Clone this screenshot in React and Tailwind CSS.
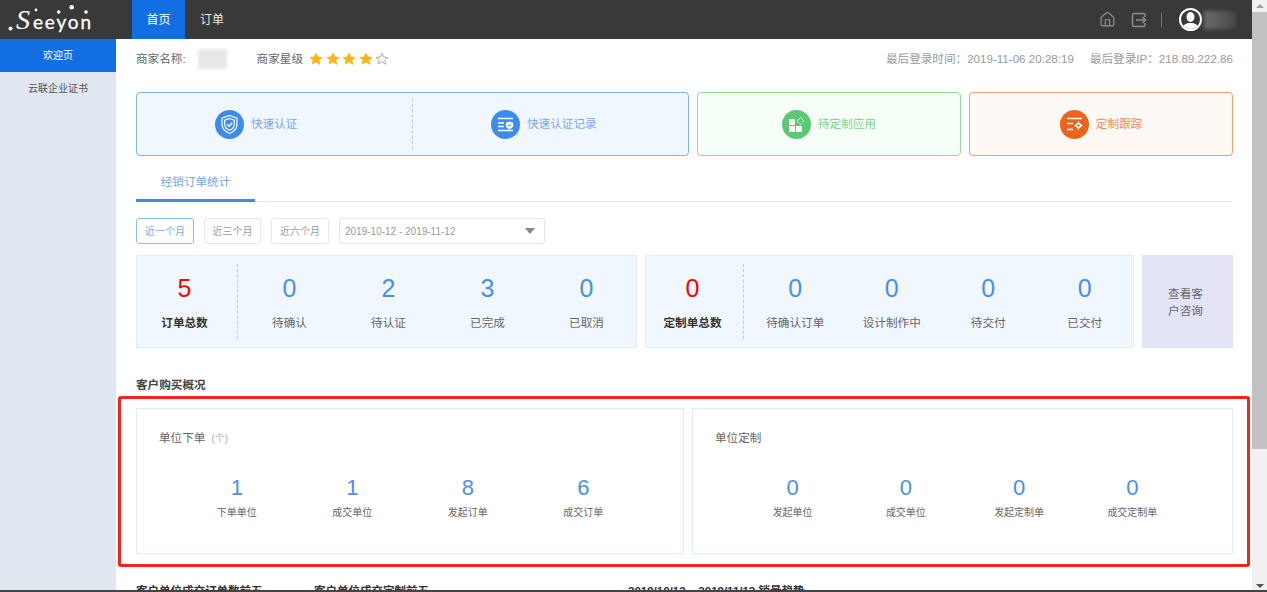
// Merchant console welcome page: top bar, side menu, order stats and customer overview.
import { Home } from 'lucide-react';

const orderStats = [['0', '待确认'], ['2', '待认证'], ['3', '已完成'], ['0', '已取消']];
const customStats = [['0', '待确认订单'], ['0', '设计制作中'], ['0', '待交付'], ['0', '已交付']];
const unitOrders = [['1', '下单单位'], ['1', '成交单位'], ['8', '发起订单'], ['6', '成交订单']];
const unitCustom = [['0', '发起单位'], ['0', '成交单位'], ['0', '发起定制单'], ['0', '成交定制单']];

function Logo() {
  return (
    <svg width="132" height="39" viewBox="0 0 132 39" fill="#fff">
      <circle cx="10.5" cy="28.5" r="2" />
      <circle cx="36" cy="10" r="1.4" />
      <circle cx="58.7" cy="12" r="1.8" />
      <circle cx="71.7" cy="7.3" r="2.3" />
      <circle cx="86" cy="12" r="1.8" />
      <text x="16" y="29" fontSize="28" fontStyle="italic" className="font-['Liberation_Serif',serif]">S</text>
      <text x="33" y="29" fontSize="19" stroke="#fff" strokeWidth="0.3" textLength="58" lengthAdjust="spacing" className="font-['Lato',sans-serif]">eeyon</text>
    </svg>
  );
}

function Star({ filled }) {
  return (
    <svg width="14" height="14" viewBox="0 0 24 24" fill={filled ? '#fdb414' : 'none'} stroke={filled ? '#fdb414' : '#a8a8a8'} strokeWidth="1.6" strokeLinejoin="round">
      <path d="M12 2l3 6.6 7.2.8-5.4 4.8 1.5 7.1L12 16.7l-6.3 3.6 1.5-7.1L1.8 9.4 9 8.6z" />
    </svg>
  );
}

function Circle({ color, children }) {
  return (
    <div className={`flex h-[29px] w-[29px] shrink-0 items-center justify-center rounded-full ${color}`}>
      <svg width="21" height="21" viewBox="0 0 21 21" fill="none" stroke="#fff" strokeWidth="1.2">{children}</svg>
    </div>
  );
}

function ShieldIcon() {
  return (
    <Circle color="bg-[#3b8cec]">
      <path d="M10.5 1.5l7.5 2.6v6c0 4.6-3.2 7.8-7.5 9.4C6.2 17.9 3 14.7 3 10.100v-6z" />
      <path d="M10.500 4.500l4.800 1.700v4c0 2.900-2 5-4.800 6.100-2.800-1.100-4.800-3.200-4.800-6.100v-4z" />
      <path d="M8 10.200l2 2 3.200-3.400" strokeWidth="1.400" />
    </Circle>
  );
}

function RecordIcon() {
  return (
    <Circle color="bg-[#3b8cec]">
      <path d="M3 4.500h15M3 9h6M3 12.500h6M3 16.500h15" strokeWidth="1.500" />
      <path d="M14.500 7.500l3.700 1.200v2.600c0 1.900-1.500 3.200-3.700 4-2.200-.8-3.700-2.100-3.700-4V8.700z" fill="#fff" stroke="none" />
      <path d="M13 11l1.200 1.200 2-2.100" stroke="#3b8cec" strokeWidth="1" />
    </Circle>
  );
}

function AppsIcon() {
  return (
    <Circle color="bg-[#58cb72]">
      <rect x="3" y="5" width="6" height="6" fill="#fff" stroke="none" />
      <rect x="3" y="12" width="6" height="6" fill="#fff" stroke="none" />
      <rect x="10" y="12" width="6" height="6" fill="#fff" stroke="none" />
      <path d="M14.500 3.500l3.500 3.500-3.500 3.500L11 7z" strokeWidth="1" />
    </Circle>
  );
}

function TrackIcon() {
  return (
    <Circle color="bg-[#e9651b]">
      <path d="M3 4.500h15M3 9.500h6M3 15.500h6" strokeWidth="1.300" />
      <circle cx="14.500" cy="11.500" r="2" strokeWidth="1.500" />
      <path d="M14.500 7.500v2M14.500 13.500v2M10.500 11.500h2M16.500 11.500h2" strokeWidth="1.300" />
    </Circle>
  );
}

function Stat({ value, label, big }) {
  return (
    <div className="flex flex-1 flex-col items-center">
      <div className={`h-[35px] text-[25px] leading-[35px] ${big ? 'text-[#ff0000]' : 'text-[#4a8fe7]'}`}>{value}</div>
      <div className={`mt-[8px] text-[11.6px] leading-[18px] ${big ? 'font-bold text-[#333]' : 'text-[#666]'}`}>{label}</div>
    </div>
  );
}

function StatPanel({ width, totalWidth, total, totalLabel, stats, statsPad }) {
  return (
    <div className={`flex h-[93px] items-center border border-[#e6edf6] bg-[#f1f7ff] ${width}`}>
      <div className={`flex h-[75px] shrink-0 items-center border-r border-dashed border-[#c4c8d0] ${totalWidth}`}>
        <Stat value={total} label={totalLabel} big />
      </div>
      <div className={`flex flex-1 ${statsPad}`}>
        {stats.map(([value, label]) => (
          <Stat key={label} value={value} label={label} />
        ))}
      </div>
    </div>
  );
}

function Overview({ title, unit, stats, className, rowClass }) {
  return (
    <div className={`h-[146px] border border-[#deebf8] pt-[21px] ${className}`}>
      <div className="flex h-[16px] items-center pl-[22px] text-[11.6px] text-[#666]">
        {title}
        {unit && <span className="ml-[6px] text-[10px] text-[#aaa]">{unit}</span>}
      </div>
      <div className={`mt-[29px] flex ${rowClass}`}>
        {stats.map(([value, label]) => (
          <div key={label} className="flex flex-1 flex-col items-center">
            <div className="h-[26px] text-[22px] leading-[26px] text-[#4a8fe7]">{value}</div>
            <div className="mt-[5px] text-[10px] leading-[14px] text-[#666]">{label}</div>
          </div>
        ))}
      </div>
    </div>
  );
}

export default function App() {
  return (
    <div className="flex h-[592px] w-full overflow-hidden border-b-2 border-[#444] bg-white font-['Liberation_Sans','Noto_Sans_CJK_SC',sans-serif]">
      <div className="flex min-w-0 flex-1 flex-col">

        {/* Top bar */}
        <header className="flex h-[39px] shrink-0 items-center bg-[#393939]">
          <div className="w-[132px]"><Logo /></div>
          <div className="flex h-full w-[53px] items-center justify-center bg-[#126ee3] text-[12px] text-white">首页</div>
          <div className="ml-[15px] text-[12px] text-[#e8e8e8]">订单</div>
          <div className="ml-auto flex items-center pr-[16px]">
            <Home size={17} strokeWidth={1.7} className="text-[#8f8f8f]" />
            <svg className="ml-[15px]" width="16" height="16" viewBox="0 0 16 16" fill="none" stroke="#8f8f8f" strokeWidth="1.400">
              <path d="M14 5V3.500A2 2 0 0 0 12 1.500H3.500a2 2 0 0 0-2 2v9a2 2 0 0 0 2 2H12a2 2 0 0 0 2-2V11" />
              <path d="M5 8h9.500M11.500 5l3 3-3 3" />
            </svg>
            <div className="ml-[14px] h-[14px] w-px bg-[#777]" />
            <div className="ml-[17px] flex h-[23px] w-[23px] items-center justify-center overflow-hidden rounded-full border-2 border-white bg-[#393939]">
              <svg width="19" height="19" viewBox="0 0 19 19" fill="#fff">
                <ellipse cx="9.500" cy="7" rx="4" ry="5" />
                <path d="M1 19c0-4 4-5 6-6h5c2 1 6 2 6 6z" />
              </svg>
            </div>
            <div className="ml-[2px] h-[18px] w-[32px] rounded-r-full bg-gradient-to-r from-[#6c6c6c] to-[#4a4a4a] blur-[2px]" />
          </div>
        </header>

        <div className="flex min-h-0 flex-1">
          {/* Side menu */}
          <aside className="w-[116px] shrink-0 bg-[#e1e7f1] text-center text-[10px]">
            <div className="flex h-[33px] items-center justify-center bg-[#126ee3] text-white">欢迎页</div>
            <div className="flex h-[33px] items-center justify-center text-[#555]">云联企业证书</div>
          </aside>

          <main className="min-w-0 flex-1 pl-[20px] pr-[19px] text-[11.6px] text-[#666]">
            {/* Merchant info */}
            <div className="flex h-[40px] items-center">
              <span>商家名称:</span>
              <div className="ml-[12px] h-[20px] w-[29px] bg-[#e8e8e8] blur-[1.500px]" />
              <span className="ml-[30px]">商家星级</span>
              <div className="ml-[6px] flex gap-[2.500px]">
                {[1, 2, 3, 4].map(n => <Star key={n} filled />)}
                <Star />
              </div>
              <div className="ml-auto flex gap-[16px] text-[#999]">
                <span>最后登录时间：2019-11-06 20:28:19</span>
                <span>最后登录IP：218.89.222.86</span>
              </div>
            </div>

            {/* Shortcuts */}
            <div className="mt-[13px] flex h-[64px] gap-[8px]">
              <div className="flex w-[553px] items-center rounded-[4px] border border-[#7db4f5] bg-[#f0f7ff] text-[#7aa5ee]">
                <div className="flex h-[50px] w-[276px] items-center gap-[7px] border-r border-dashed border-[#c0c6d6] pl-[78px]">
                  <ShieldIcon />
                  快速认证
                </div>
                <div className="flex items-center gap-[7px] pl-[78px]">
                  <RecordIcon />
                  快速认证记录
                </div>
              </div>
              <div className="flex w-[264px] items-center justify-center gap-[7px] rounded-[4px] border border-[#8fdc9d] bg-[#f5fff7] text-[#7ed08b]">
                <AppsIcon />
                待定制应用
              </div>
              <div className="flex w-[264px] items-center justify-center gap-[7px] rounded-[4px] border border-[#f5a06d] bg-[#fff9f6] text-[#f08a55]">
                <TrackIcon />
                定制跟踪
              </div>
            </div>

            {/* Tab */}
            <div className="mt-[9px] border-b border-[#e8e8e8]">
              <div className="-mb-px flex h-[37px] w-[119px] items-center justify-center border-b-[3px] border-[#3f8ae6] text-[#7aa5ee]">经销订单统计</div>
            </div>

            {/* Date range */}
            <div className="mt-[16px] flex h-[26px] gap-[10px] text-[10px] text-[#999]">
              <div className="flex w-[58px] items-center justify-center rounded-[3px] border border-[#8dbcf3] text-[#7aa5ee]">近一个月</div>
              <div className="flex w-[57px] items-center justify-center rounded-[3px] border border-[#e8e8e8]">近三个月</div>
              <div className="flex w-[58px] items-center justify-center rounded-[3px] border border-[#e8e8e8]">近六个月</div>
              <div className="flex w-[206px] items-center justify-between rounded-[3px] border border-[#e4e4e4] pl-[5px] pr-[9px]">
                2019-10-12 - 2019-11-12
                <div className="h-0 w-0 border-x-[5px] border-t-[6px] border-x-transparent border-t-[#888]" />
              </div>
            </div>

            {/* Order stats */}
            <div className="mt-[11px] flex gap-[8px]">
              <StatPanel width="w-[501px]" totalWidth="w-[101px] pr-[5px]" statsPad="pl-[2px]" total="5" totalLabel="订单总数" stats={orderStats} />
              <StatPanel width="w-[489px]" totalWidth="w-[98px] pr-[4px]" statsPad="pl-[3px]" total="0" totalLabel="定制单总数" stats={customStats} />
              <div className="flex h-[93px] w-[91px] flex-col items-center justify-center bg-[#e3e4f6] pr-[4px] leading-[17px]">
                <span>查看客</span>
                <span>户咨询</span>
              </div>
            </div>

            <div className="mt-[29px] h-[16px] font-bold leading-[16px] text-[#444]">客户购买概况</div>

            {/* Customer overview, boxed in red */}
            <div className="-ml-[18px] -mr-[17px] mt-[3px] h-[171px] rounded-[3px] border-[3px] border-[#f4241c] pl-[15px] pr-[14px] pt-[9px]">
              <div className="flex gap-[8px]">
                <Overview className="w-[548px]" rowClass="px-[42px]" title="单位下单" unit="(个)" stats={unitOrders} />
                <Overview className="flex-1" rowClass="px-[43px]" title="单位定制" stats={unitCustom} />
              </div>
            </div>

            {/* Next section, cut off by the window */}
            <div className="mt-[17px] flex text-[11.5px] leading-[14px] text-[#333]">
              <span className="w-[178px] font-bold">客户单位成交订单数前五</span>
              <span className="w-[314px] font-bold">客户单位成交定制前五</span>
              <span className="font-bold">2019/10/12 – 2019/11/12 销量趋势</span>
            </div>
          </main>
        </div>
      </div>

      {/* Scrollbar */}
      <div className="flex w-[15px] shrink-0 flex-col items-center bg-[#f1f1f1]">
        <div className="mt-[4px] h-0 w-0 border-x-[4px] border-b-[4px] border-x-transparent border-b-[#a3a3a3]" />
        <div className="mt-[4px] h-[437px] w-full bg-[#c1c1c1]" />
        <div className="mt-auto mb-[2px] h-0 w-0 border-x-[4px] border-t-[4px] border-x-transparent border-t-[#505050]" />
      </div>
    </div>
  );
}
